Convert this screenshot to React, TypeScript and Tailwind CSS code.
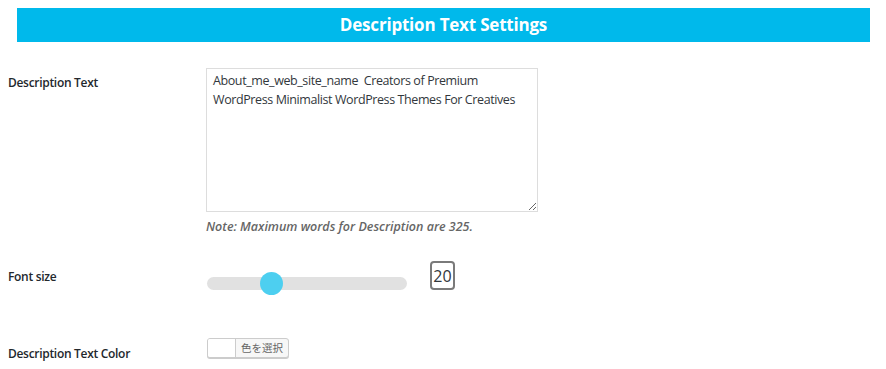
import { useState } from 'react'

const font = { fontFamily: '"Open Sans", "Noto Sans", sans-serif' }

export default function App() {
  const [value] = useState(20)
  const [text] = useState(
    'About_me_web_site_name  Creators of Premium WordPress Minimalist WordPress Themes For Creatives'
  )

  return (
    <div className="w-[886px] h-[369px] bg-white pt-2 text-[#23282d] overflow-hidden" style={font}>
      {/* section header */}
      <div className="ml-[17px] w-[853px] h-[34px] bg-[#00b9eb] flex items-center justify-center">
        <h2 className="text-white font-bold text-[17px] tracking-[-0.2px]">Description Text Settings</h2>
      </div>

      {/* description text */}
      <div className="flex mt-[26px]">
        <label className="w-[206px] pl-2 pt-[5px] text-[12px] tracking-[-0.3px] font-semibold leading-5">Description Text</label>
        <div className="flex flex-col">
          <textarea
            readOnly
            defaultValue={text}
            className="w-[332px] h-[144px] border border-[#dddddd] px-[6px] py-[2px] text-[12.5px] tracking-[-0.4px] leading-[19px] text-[#32373c] outline-none resize-y"
          />
          <p className="mt-[6px] text-[12.5px] leading-[18px] italic font-semibold text-[#666666]">
            Note: Maximum words for Description are 325.
          </p>
        </div>
      </div>

      {/* font size */}
      <div className="flex items-center mt-[40px]">
        <label className="w-[206px] pl-2 text-[12px] tracking-[-0.3px] font-semibold leading-5 mt-[-12px]">Font size</label>
        <div className="relative w-[200px] h-[13px] ml-[1px] mt-[1px] rounded-full bg-[#e1e1e1]">
          <div className="absolute left-[53px] top-[-5px] w-[23px] h-[23px] rounded-full bg-[#4dcff0]" />
        </div>
        <div className="ml-[23px] mt-[-15px] w-[25px] h-[29px] border-2 border-[#7a7a7a] rounded-[4px] flex items-center justify-center text-[16px] text-[#32373c]">
          {value}
        </div>
      </div>

      {/* text color */}
      <div className="flex items-center mt-[41px]">
        <label className="w-[206px] pl-2 pt-[13px] text-[12px] tracking-[-0.3px] font-semibold leading-5">Description Text Color</label>
        <button className="ml-[1px] flex h-[20px] border border-[#cccccc] rounded-[3px] bg-[#f7f7f7] shadow-[0_1px_0_#cccccc] overflow-hidden">
          <span className="w-[28px] h-full bg-white border-r border-[#cccccc]" />
          <span
            className="px-[5px] text-[10.5px] leading-[18px] text-[#666666]"
            style={{ fontFamily: '"Noto Sans CJK JP", sans-serif' }}
          >
            色を選択
          </span>
        </button>
      </div>
    </div>
  )
}
